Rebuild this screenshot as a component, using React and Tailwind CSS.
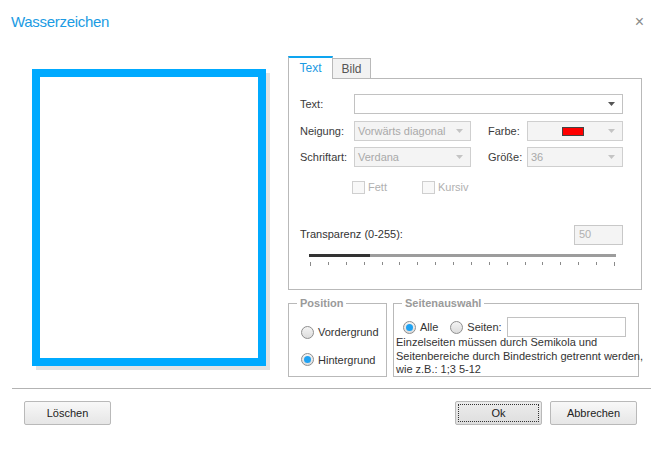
import React from "react";

const Arrow = ({ disabled }) => (
  <svg width="7" height="4" viewBox="0 0 7 4" className="shrink-0">
    <path d="M0 0 H7 L3.5 4 Z" fill={disabled ? "#c4c4c4" : "#555555"} />
  </svg>
);

const Combo = ({ w, value, disabled, children }) => (
  <div
    className={`h-[20px] ${w} flex items-center justify-between border pl-[3px] pr-[7px] ${
      disabled ? "border-[#cfcfcf] bg-[#f4f4f4] text-[#a9a9a9]" : "border-[#c2c2c2] bg-white text-[#333]"
    }`}
  >
    <div className="flex-1 flex items-center">{children ?? value}</div>
    <Arrow disabled={disabled} />
  </div>
);

const Radio = ({ checked }) => (
  <div className="w-[13px] h-[13px] rounded-full border border-[#8e8e8e] bg-gradient-to-b from-[#f4f4f4] to-[#dcdcdc] flex items-center justify-center shrink-0">
    {checked && <div className="w-[7px] h-[7px] rounded-full bg-[#1fa2f2]" />}
  </div>
);

const Check = () => (
  <div className="w-[13px] h-[13px] border border-[#cfcfcf] bg-[#f8f8f8] shrink-0" />
);

const Button = ({ children, focus }) => (
  <div
    className={`w-[87px] h-[24px] rounded-[2px] border border-[#b9b9b9] flex items-center justify-center text-[#222] p-[2px] ${
      focus ? "bg-gradient-to-b from-[#ececec] to-[#dedede]" : "bg-gradient-to-b from-[#f8f8f8] to-[#e6e6e6]"
    }`}
  >
    <div
      className={`w-full h-full flex items-center justify-center ${
        focus ? "border border-dotted border-[#333]" : ""
      }`}
    >
      {children}
    </div>
  </div>
);

export default function App() {
  const ticks = Array.from({ length: 18 });
  return (
    <div className="w-[663px] h-[451px] bg-white font-['Liberation_Sans',Arial,sans-serif] text-[11px] text-[#3a3a3a] overflow-hidden">
      {/* header */}
      <div className="h-[44px] flex items-center justify-between pl-[11px] pr-[19px]">
        <div className="text-[15px] text-[#1b9be3] tracking-[-0.3px]">Wasserzeichen</div>
        <div className="text-[16px] text-[#8a8a8a] leading-none">×</div>
      </div>

      {/* main */}
      <div className="h-[344px] flex">
        {/* preview */}
        <div className="pl-[32px] pt-[25px]">
          <div className="w-[234px] h-[297px] border-[8px] border-[#00aaff] bg-white shadow-[4px_4px_0_#e3e3e3]" />
        </div>

        {/* right column */}
        <div className="ml-[22px] pt-[12px] w-[354px]">
          {/* tabs */}
          <div className="flex items-end h-[23px] relative z-10 -mb-px">
            <div className="w-[45px] h-[23px] bg-white border-t-2 border-t-[#0ea5f0] border-x border-x-[#b9b9b9] flex items-center justify-center text-[#1b9be3] text-[12px] pb-[1px]">
              Text
            </div>
            <div className="w-[38px] h-[21px] bg-[#f2f2f2] border border-[#b9b9b9] border-l-0 flex items-center justify-center text-[#555] text-[12px]">
              Bild
            </div>
          </div>
          {/* panel */}
          <div className="h-[212px] border border-[#b9b9b9] pt-[15px] pl-[11px]">
            <div className="flex items-center">
              <div className="w-[54px]">Text:</div>
              <Combo w="w-[269px]" value="" />
            </div>
            <div className="flex items-center mt-[7px]">
              <div className="w-[54px]">Neigung:</div>
              <Combo w="w-[117px]" value="Vorwärts diagonal" disabled />
              <div className="w-[39px] ml-[17px]">Farbe:</div>
              <Combo w="w-[96px]" disabled>
                <div className="flex-1 flex justify-center pl-[6px]">
                  <div className="w-[22px] h-[9px] bg-[#ff0000] border border-[#444]" />
                </div>
              </Combo>
            </div>
            <div className="flex items-center mt-[6px]">
              <div className="w-[54px]">Schriftart:</div>
              <Combo w="w-[117px]" value="Verdana" disabled />
              <div className="w-[39px] ml-[17px]">Größe:</div>
              <Combo w="w-[96px]" value="36" disabled />
            </div>
            <div className="flex items-center mt-[12px] ml-[52px] text-[#b0b0b0]">
              <Check />
              <span className="ml-[3px]">Fett</span>
              <div className="ml-[35px]">
                <Check />
              </div>
              <span className="ml-[3px]">Kursiv</span>
            </div>
            <div className="flex items-center justify-between mt-[29px] w-[323px]">
              <span className="text-[#333]">Transparenz (0-255):</span>
              <div className="w-[49px] h-[20px] border border-[#c8c8c8] bg-[#f4f4f4] text-[#b0b0b0] flex items-center pl-[4px]">
                50
              </div>
            </div>
            <div className="mt-[9px] ml-[9px] w-[307px]">
              <div className="flex h-[3px]">
                <div className="w-[61px] bg-[#333333]" />
                <div className="flex-1 bg-[#9c9c9c]" />
              </div>
              <div className="flex justify-between mt-[5px] w-[306px] pl-[1px]">
                {ticks.map((_, i) => (
                  <div
                    key={i}
                    className={`w-px bg-[#8a8a8a] ${i === 0 || i === 17 ? "h-[4px]" : "h-[3px]"}`}
                  />
                ))}
              </div>
            </div>
          </div>

          {/* groups */}
          <div className="flex gap-[6px] mt-[13px]">
            <div className="relative w-[99px] h-[74px] border border-[#b9b9b9]">
              <span className="absolute -top-[8px] left-[8px] bg-white px-[3px] font-bold text-[#9a9a9a] leading-[14px]">
                Position
              </span>
              <div className="flex items-center mt-[20px] ml-[12px]">
                <Radio />
                <span className="ml-[4px] text-[#333]">Vordergrund</span>
              </div>
              <div className="flex items-center mt-[11px] ml-[12px]">
                <Radio checked />
                <span className="ml-[4px] text-[#333]">Hintergrund</span>
              </div>
            </div>
            <div className="relative w-[246px] h-[74px] border border-[#b9b9b9] pl-[2px]">
              <span className="absolute -top-[8px] left-[8px] bg-white px-[3px] font-bold text-[#9a9a9a] leading-[14px]">
                Seitenauswahl
              </span>
              <div className="flex items-center mt-[13px] ml-[7px]">
                <Radio checked />
                <span className="ml-[4px] text-[#333]">Alle</span>
                <div className="ml-[12px]">
                  <Radio />
                </div>
                <span className="ml-[4px] text-[#333]">Seiten:</span>
                <div className="ml-[5px] w-[119px] h-[20px] border border-[#c2c2c2] bg-white" />
              </div>
              <div className="leading-[13.5px] text-[#333] whitespace-nowrap -mt-[1px]">
                Einzelseiten müssen durch Semikola und
                <br />
                Seitenbereiche durch Bindestrich getrennt werden,
                <br />
                wie z.B.: 1;3 5-12
              </div>
            </div>
          </div>
        </div>
      </div>

      {/* separator */}
      <div className="mx-[12px] h-px bg-[#b3b3b3]" />

      {/* buttons */}
      <div className="flex items-center mt-[12px] pl-[24px] pr-[26px]">
        <Button>Löschen</Button>
        <div className="flex-1" />
        <Button focus>Ok</Button>
        <div className="ml-[8px]">
          <Button>Abbrechen</Button>
        </div>
      </div>
    </div>
  );
}
